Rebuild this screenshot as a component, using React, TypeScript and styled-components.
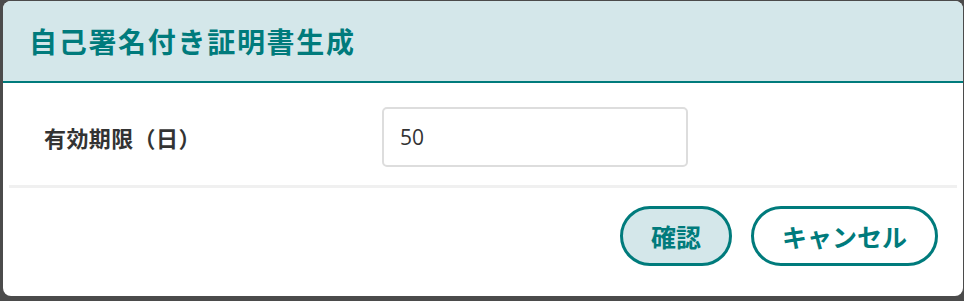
import React from 'react';
import styled, { createGlobalStyle } from 'styled-components';

const GlobalStyle = createGlobalStyle`
  html, body {
    margin: 0;
    padding: 0;
    background: #4b4b4b;
  }
  body {
    font-family: "Noto Sans CJK JP", "Open Sans", sans-serif;
    overflow: hidden;
  }
`;

const Backdrop = styled.div`
  width: 964px;
  height: 301px;
  padding: 1px 1px 0 3px;
  box-sizing: border-box;
`;

const Dialog = styled.div`
  width: 960px;
  height: 295px;
  background: #fff;
  border-radius: 8px;
  overflow: hidden;
  display: flex;
  flex-direction: column;
`;

const Header = styled.div`
  height: 80px;
  display: flex;
  align-items: center;
  padding: 0 26px;
  background: #d4e7ea;
  border-bottom: 2px solid #007b7c;
`;

const Title = styled.h1`
  margin: 0;
  font-size: 28px;
  font-weight: 700;
  letter-spacing: 1.7px;
  color: #007b7c;
`;

const Body = styled.div`
  margin: 0 6px;
  padding: 24px 0 18px;
  border-bottom: 3px solid #f0f0f0;
`;

const FieldRow = styled.div`
  display: grid;
  grid-template-columns: 373px 306px;
  align-items: center;
`;

const Label = styled.label`
  padding-left: 35px;
  font-size: 22px;
  font-weight: 700;
  letter-spacing: 0.4px;
  color: #333;
`;

const Input = styled.input`
  box-sizing: border-box;
  width: 306px;
  height: 60px;
  padding: 0 16px;
  border: 2px solid #dddddd;
  border-radius: 5px;
  font-family: "Open Sans", "Noto Sans CJK JP", sans-serif;
  font-size: 21px;
  color: #333;
  background: #fff;
  outline: none;
`;

const Footer = styled.div`
  display: flex;
  justify-content: flex-end;
  gap: 19px;
  padding: 18px 25px 0;
`;

const Button = styled.button<{ $primary?: boolean }>`
  box-sizing: border-box;
  height: 60px;
  padding: 0 28px;
  border: 3px solid #007b7c;
  border-radius: 30px;
  background: ${(p) => (p.$primary ? '#d4e7ea' : '#fff')};
  color: #007b7c;
  font-family: "Noto Sans CJK JP", sans-serif;
  font-size: 25px;
  font-weight: 700;
  cursor: pointer;
`;

export default function App() {
  return (
    <>
      <GlobalStyle />
      <Backdrop>
        <Dialog>
          <Header>
            <Title>自己署名付き証明書生成</Title>
          </Header>
          <Body>
            <FieldRow>
              <Label htmlFor="days">有効期限（日）</Label>
              <Input id="days" type="text" defaultValue="50" />
            </FieldRow>
          </Body>
          <Footer>
            <Button $primary>確認</Button>
            <Button>キャンセル</Button>
          </Footer>
        </Dialog>
      </Backdrop>
    </>
  );
}
